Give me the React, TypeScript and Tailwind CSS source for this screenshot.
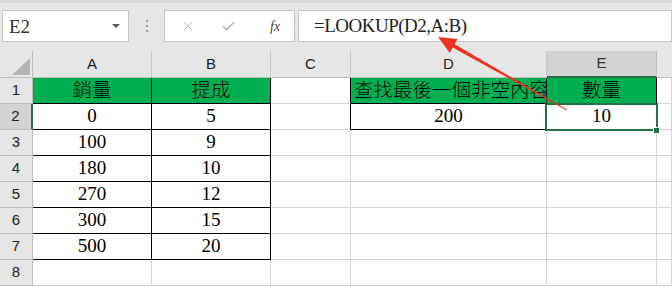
import { X, Check } from "lucide-react";

const cols = ["A", "B", "C", "D", "E"];

const data: string[][] = [
  ["銷量", "提成", "", "查找最後一個非空內容", "數量"],
  ["0", "5", "", "200", "10"],
  ["100", "9"],
  ["180", "10"],
  ["270", "12"],
  ["300", "15"],
  ["500", "20"],
  [],
];

const serif = "font-['Liberation_Serif','Noto_Sans_CJK_TC',serif]";

const App = () => {
  return (
    <div className="relative w-[672px] h-[289px] overflow-hidden bg-white">
      {/* formula bar */}
      <div className="h-[51px] bg-[#e6e6e6] border-t-[3px] border-[#dadada] pt-[7px] flex items-start">
        <div className="ml-[2px] w-[127px] h-[32px] bg-white border border-[#c6c6c6] flex items-center justify-between pl-[6px] pr-[8px]">
          <span className={`${serif} text-[19px] text-[#333] leading-none`}>E2</span>
          <span className="w-0 h-0 border-l-[4px] border-r-[4px] border-t-[4px] border-l-transparent border-r-transparent border-t-[#555]" />
        </div>
        <div className="w-[35px] h-[32px] flex flex-col items-center justify-center gap-[3px]">
          <span className="w-[2px] h-[2px] bg-[#a0a0a0]" />
          <span className="w-[2px] h-[2px] bg-[#a0a0a0]" />
          <span className="w-[2px] h-[2px] bg-[#a0a0a0]" />
        </div>
        <div className="w-[131px] h-[32px] bg-white border border-[#c6c6c6] flex items-center">
          <X className="ml-[16px] w-[14px] h-[14px] text-[#b4b4b4]" strokeWidth={1.5} />
          <Check className="ml-[26px] w-[15px] h-[15px] text-[#b4b4b4]" strokeWidth={2.5} />
          <span className={`ml-[34px] ${serif} italic text-[14px] text-[#444]`}>fx</span>
        </div>
        <div className="ml-[3px] flex-1 h-[32px] bg-white border border-[#c6c6c6] flex items-center pl-[15px]">
          <span className={`${serif} text-[19px] tracking-[-0.5px] text-[#222]`}>=LOOKUP(D2,A:B)</span>
        </div>
      </div>

      {/* sheet */}
      <div className="grid grid-cols-[33px_119px_119px_80px_196px_110px_1fr]">
        {/* header row */}
        <div className="h-[27px] bg-[#e6e6e6] border-r border-b border-[#bdbdbd] relative">
          <svg className="absolute left-[12px] top-[7px]" width="18" height="17" viewBox="0 0 18 17">
            <polygon points="18,0 18,17 0,17" fill="#b4b4b4" />
          </svg>
        </div>
        {cols.map((c) => (
          <div
            key={c}
            className={
              c === "E"
                ? "h-[27px] bg-[#d2d2d2] border-r border-r-[#bdbdbd] border-b-2 border-b-[#217346] flex items-center justify-center font-['Liberation_Sans',sans-serif] text-[15px] text-[#333]"
                : "h-[27px] bg-[#e6e6e6] border-r border-b border-[#c8c8c8] border-b-[#bdbdbd] flex items-center justify-center font-['Liberation_Sans',sans-serif] text-[15px] text-[#222]"
            }
          >
            {c}
          </div>
        ))}
        <div className="h-[27px] bg-[#e6e6e6] border-b border-[#bdbdbd]" />

        {data.map((row, ri) => {
          const r = ri + 1;
          return [
            <div
              key={`h${r}`}
              className={
                r === 2
                  ? "h-[26px] bg-[#d2d2d2] border-r-2 border-r-[#217346] border-b border-b-[#bdbdbd] flex items-center justify-center font-['Liberation_Sans',sans-serif] text-[15px] text-[#222]"
                  : "h-[26px] bg-[#e6e6e6] border-r border-b border-[#bdbdbd] flex items-center justify-center font-['Liberation_Sans',sans-serif] text-[15px] text-[#222]"
              }
            >
              {r}
            </div>,
            ...[0, 1, 2, 3, 4, 5].map((c) => {
              const green = r === 1 && (c === 0 || c === 1 || c === 3 || c === 4);
              const rightBlack = (r <= 7 && (c === 0 || c === 1)) || (r <= 2 && (c === 2 || c === 3 || c === 4));
              const bottomBlack = (r <= 7 && (c === 0 || c === 1)) || (r <= 2 && (c === 3 || c === 4));
              const text = row[c] ?? "";
              const isLong = r === 1 && c === 3;
              return (
                <div
                  key={`${r}-${c}`}
                  className={[
                    "h-[26px] border-r border-b flex items-center overflow-hidden whitespace-nowrap text-black",
                    serif,
                    green ? "bg-[#00b050]" : "bg-white",
                    rightBlack ? "border-r-black" : "border-r-[#d4d4d4]",
                    bottomBlack ? "border-b-black" : "border-b-[#d4d4d4]",
                    isLong ? "justify-start pl-[3px]" : "justify-center",
                    r === 1 ? "text-[19.5px] font-light text-[#111]" : "text-[19px] text-[#111]",
                  ].join(" ")}
                >
                  {text}
                </div>
              );
            }),
          ];
        })}
      </div>

      {/* selection E2 */}
      <div className="absolute left-[545px] top-[103px] w-[113px] h-[28px] border-2 border-[#217346]" />
      <div className="absolute left-[653px] top-[127px] w-[7px] h-[7px] bg-[#217346] border border-white" />

      {/* red arrow */}
      <svg className="absolute left-0 top-0 pointer-events-none" width="672" height="289">
        <polygon
          points="438,37 457.6,38.9 454.7,44.2 567.1,109.6 566.9,110.4 452.7,47.6 449.8,52.9"
          fill="#ea3323"
        />
      </svg>
    </div>
  );
};

export default App;
